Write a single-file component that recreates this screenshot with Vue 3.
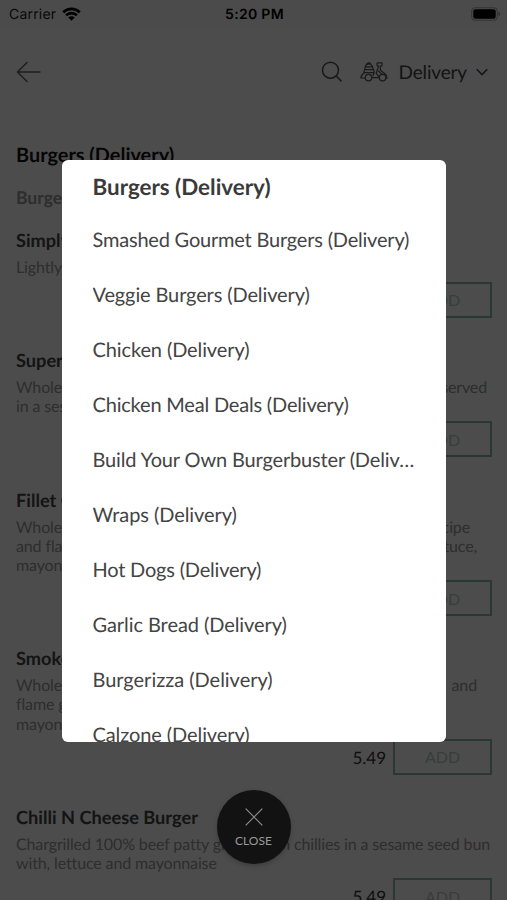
<script setup>
import { ref } from 'vue'

// the section that is open comes first and is drawn bold
const current = ref(0)
const menuOpen = ref(true)

const sections = [
  { name: 'Burgers (Delivery)', track: 0 },
  { name: 'Smashed Gourmet Burgers (Delivery)', track: -0.2 },
  { name: 'Veggie Burgers (Delivery)', track: -0.12 },
  { name: 'Chicken (Delivery)', track: -0.11 },
  { name: 'Chicken Meal Deals (Delivery)', track: -0.19 },
  { name: 'Build Your Own Burgerbuster (Delivery)', track: -0.15 },
  { name: 'Wraps (Delivery)', track: -0.08 },
  { name: 'Hot Dogs (Delivery)', track: -0.2 },
  { name: 'Garlic Bread (Delivery)', track: -0.07 },
  { name: 'Burgerizza (Delivery)', track: -0.02 },
  { name: 'Calzone (Delivery)', track: -0.09 },
]

const products = [
  { name: 'Simply Chicken', lines: [['Lightly seasoned chicken', '']], price: '4.99' },
  { name: 'Super Burger', lines: [['Whole chicken breast fillet', 'served'], ['in a sesame seed bun', '']], price: '5.49' },
  { name: 'Fillet Original', lines: [['Whole chicken breast fillet', 'recipe'], ['and flame grilled', 'lettuce,'], ['mayonnaise', '']], price: '5.49' },
  { name: 'Smoked Burger', lines: [['Whole chicken breast fillet', 'and'], ['flame grilled', ''], ['mayonnaise', '']], price: '5.49' },
  { name: 'Chilli N Cheese Burger', lines: [['Chargrilled 100% beef patty grilled', 'on chillies in a sesame seed bun'], ['with, lettuce and mayonnaise', '']], price: '5.49' },
]
// right edge of the trailing words, per product and line
const ends = [[0], [21, 0], [38, 31, 0], [31, 0, 0], [18, 0]]
</script>

<template>
  <div class="screen">
    <div class="page">
      <div class="status">
        <div class="carrier">
          <span>Carrier</span>
          <svg width="19" height="14" viewBox="0 0 19 14" fill="none" stroke="#000" stroke-width="2.7">
            <path d="M1.2 5.2a11.8 11.8 0 0 1 16.6 0" />
            <path d="M4.1 8.3a7.7 7.7 0 0 1 10.8 0" />
            <path d="M9.5 13.8L6.3 10.5a4.6 4.6 0 0 1 6.4 0z" fill="#000" stroke="none" />
          </svg>
        </div>
        <b class="clock">5:20 PM</b>
        <svg class="battery" width="30" height="14" viewBox="0 0 30 14">
          <rect x=".7" y=".7" width="25.6" height="12.6" rx="3.6" fill="none" stroke="#aaa" stroke-width="1.1" />
          <rect x="2.3" y="2.3" width="22.4" height="9.4" rx="2" fill="#000" />
          <path d="M27.6 4.8v4.4q1.6-.6 1.6-2.2t-1.6-2.2" fill="#999" />
        </svg>
      </div>

      <header class="nav">
        <svg class="back" width="26" height="22" viewBox="0 0 26 22" fill="none" stroke="#666" stroke-width="1.5">
          <path d="M24.5 11H1.5M11.5 1L1.5 11l10 10" />
        </svg>
        <svg class="search" width="22" height="22" viewBox="0 0 22 22" fill="none" stroke="#555" stroke-width="1.5">
          <circle cx="9.5" cy="9.2" r="8" />
          <path d="M15.2 15l5.3 5.4" />
        </svg>
        <svg class="scooter" width="28" height="20" viewBox="0 0 28 20" fill="none" stroke="#555" stroke-width="1.2" stroke-linejoin="round">
          <path d="M4.6 7.6L5.4 4.2Q6.2 1.8 8.8 1.8t3.6 2.4L13.4 7.6M6.6 2.4q.4-1.6 2.2-1.6T11 2.4M5.4 4.8h7.2" />
          <path d="M4.6 7.6h9l.6 3-1.4 3.4M4.6 7.6L3.8 10.6h10.4M4.6 10.4Q1.2 12.4.8 16h4.4M12 15.6h7" />
          <path d="M17 .8h5v3.2h-1.8l.4 4.6 4.4 3.2q2.2 1.4 2 4.3h-1.2M17 .8v2.6l1.6.8-2.4 7 3 4M18.2 8.6l4 4" />
          <circle cx="8.5" cy="15.6" r="3.3" />
          <circle cx="22.6" cy="15.6" r="3.3" />
        </svg>
        <span class="mode">Delivery</span>
        <svg class="chevron" width="12" height="8" viewBox="0 0 12 8" fill="none" stroke="#444" stroke-width="1.5">
          <path d="M.7 1.2L6 6.6l5.3-5.4" />
        </svg>
      </header>

      <main class="menu">
        <h1>Burgers (Delivery)</h1>
        <h2>Burgers (Delivery)</h2>
        <section v-for="(p, i) in products" :key="p.name" class="product">
          <h3>{{ p.name }}</h3>
          <p v-for="(line, j) in p.lines" :key="j" class="line">
            <span>{{ line[0] }}</span>
            <span v-if="line[1]" :style="{ marginRight: ends[i][j] - 16 + 'px' }">{{ line[1] }}</span>
          </p>
          <div class="buy">
            <span class="price">{{ p.price }}</span>
            <button class="add">ADD</button>
          </div>
        </section>
      </main>
    </div>

    <div v-if="menuOpen" class="overlay">
      <ul class="sheet">
        <li
          v-for="(s, i) in sections" :key="s.name" :class="{ active: i === current }"
          :style="{ letterSpacing: s.track + 'px' }" @click="current = i"
        >{{ s.name }}</li>
      </ul>
      <button class="close" @click="menuOpen = false">
        <svg width="18" height="18" viewBox="0 0 18 18" fill="none" stroke="#8e8e8e" stroke-width="1.2">
          <path d="M.7.7l16.6 16.6M17.3.7L.7 17.3" />
        </svg>
        <span>CLOSE</span>
      </button>
    </div>
  </div>
</template>

<style>
body {
  margin: 0;
  background: #4c4c4c;
}
</style>

<style scoped>
.screen {
  position: relative;
  width: 507px;
  height: 900px;
  overflow: hidden;
  background: #fff;
  font-family: Lato, sans-serif;
  text-rendering: geometricPrecision;
}
h1, h2, h3, p, ul { margin: 0; padding: 0; }
button { font-family: inherit; padding: 0; }

/* status bar */
.status {
  display: grid;
  grid-template-columns: 1fr auto 1fr;
  align-items: center;
  height: 27px;
  padding: 1px 7px 0 9px;
  box-sizing: border-box;
  background: #fbfbfb;
  font-family: Inter, sans-serif;
  font-size: 14px;
}
.carrier { display: flex; align-items: center; gap: 6px; color: #222; letter-spacing: 0.2px; }
.clock { font-weight: 600; font-size: 14px; letter-spacing: 0.3px; }
.battery { justify-self: end; margin-right: -1px; }

/* top navigation */
.nav {
  display: flex;
  align-items: center;
  height: 90px;
  padding: 0 19px 0 16px;
}
.back { margin-right: auto; }
.search { margin-right: 17px; }
.scooter { margin-right: 11px; }
.mode { font-size: 19px; color: #444; margin-right: 9px; letter-spacing: -0.15px; padding-top: 1px; }

/* product list */
.menu { padding: 26px 15px 0 16px; }
h1 { font-size: 19.9px; line-height: 24px; color: #111; }
h2 { font-size: 17.5px; line-height: 22px; margin: 20px 0 19.6px; color: #999; }
.product { padding-bottom: 31.3px; }
h3 { font-size: 18.2px; line-height: 22px; margin-bottom: 7px; color: #444; }
.line {
  display: flex;
  justify-content: space-between;
  font-size: 16px;
  line-height: 19.1px;
  letter-spacing: -0.13px;
  white-space: nowrap;
  color: #999;
}
.buy { display: flex; justify-content: flex-end; align-items: center; margin-top: 5.1px; }
.price { font-size: 17px; color: #333; margin-right: 7px; padding-top: 1px; }
.add {
  width: 99px;
  height: 36px;
  border: 2px solid #8cbcab;
  background: transparent;
  color: #b4cfc0;
  font-size: 16px;
}

.overlay {
  position: absolute;
  inset: 0;
  display: flex;
  flex-direction: column;
  align-items: center;
  background: rgba(0, 0, 0, 0.7);
}
.sheet {
  width: 384px;
  height: 582px;
  margin-top: 159.5px;
  box-sizing: border-box;
  padding: 0 30px 0 31px;
  overflow: hidden;
  list-style: none;
  background: #fff;
  border-radius: 6px;
}
.sheet li {
  height: 55px;
  line-height: 55px;
  font-size: 20px;
  color: #444;
  white-space: nowrap;
  overflow: hidden;
  text-overflow: ellipsis;
}
.sheet .active { font-weight: 700; font-size: 22.4px; color: #3a3a3a; height: 53px; line-height: 53px; }
.close {
  display: flex;
  flex-direction: column;
  align-items: center;
  justify-content: center;
  gap: 7px;
  width: 74px;
  height: 74px;
  margin-top: 48px;
  padding-top: 3px;
  border: 0;
  border-radius: 50%;
  background: #121212;
  color: #999;
  font-size: 12px;
  box-shadow: 0 2px 5px rgba(0, 0, 0, 0.2);
}
</style>
